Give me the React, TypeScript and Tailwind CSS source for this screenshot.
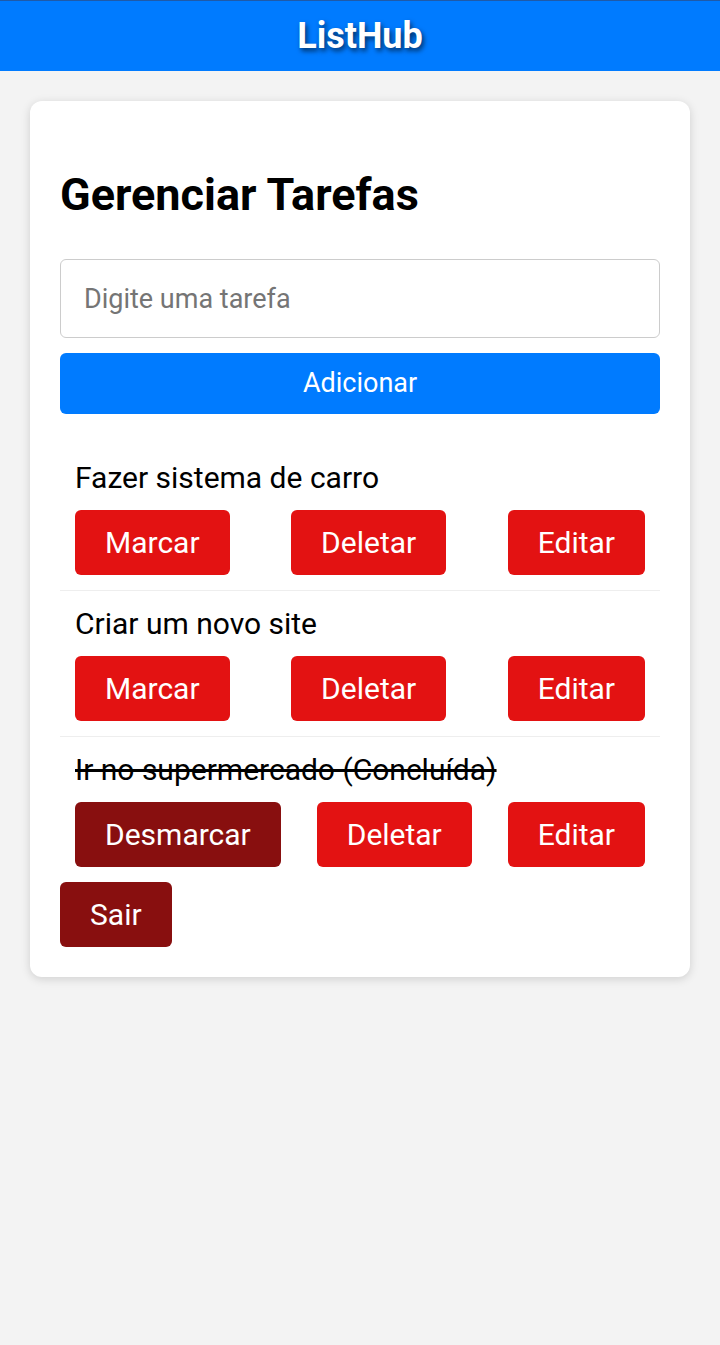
import React from "react";

const font = { fontFamily: "Roboto, 'Noto Sans', sans-serif" };

const tasks = [
  { text: "Fazer sistema de carro", done: false },
  { text: "Criar um novo site", done: false },
  { text: "Ir no supermercado", done: true },
];

export default function App() {
  return (
    <div className="min-h-[1345px] bg-[#f3f3f3]" style={font}>
      <header className="h-[71px] bg-[#007bff] border-t border-[#1f5aa8] flex items-center justify-center">
        <h1 className="text-[36px] font-bold text-white leading-none [text-shadow:2px_3px_5px_rgba(0,0,0,0.6)]">
          ListHub
        </h1>
      </header>

      <main className="px-[30px] pt-[30px]">
        <div className="bg-white rounded-[12px] p-[30px] shadow-[0_2px_10px_rgba(0,0,0,0.15)]">
          <h2 className="text-[45px] font-bold text-black leading-none mt-[41px] mb-[42px]">
            Gerenciar Tarefas
          </h2>

          <input
            type="text"
            placeholder="Digite uma tarefa"
            className="w-full h-[79px] border border-[#cccccc] rounded-[6px] px-[23px] text-[27px] text-black placeholder:text-[#757575] outline-none"
          />
          <button className="mt-[15px] w-full h-[61px] bg-[#007bff] rounded-[6px] text-white text-[27px]">
            Adicionar
          </button>

          <ul className="mt-[31px]">
            {tasks.map((t, i) => (
              <TaskItem key={i} {...t} last={i === tasks.length - 1} />
            ))}
          </ul>

          <button className="h-[65px] px-[30px] bg-[#880f0f] rounded-[6px] text-white text-[30px]">
            Sair
          </button>
        </div>
      </main>
    </div>
  );
}

function TaskItem({
  text,
  done,
  last,
}: {
  text: string;
  done: boolean;
  last: boolean;
}) {
  return (
    <li
      className={
        "px-[15px] pb-[15px] " + (last ? "" : "border-b border-[#eeeeee]")
      }
    >
      <div
        className={
          "text-[30px] text-black leading-[36px] pt-[15px] " +
          (done ? "line-through" : "")
        }
      >
        {done ? text + " (Concluída)" : text}
      </div>
      <div className="mt-[14px] flex justify-between">
        <ActionButton dark={done}>{done ? "Desmarcar" : "Marcar"}</ActionButton>
        <ActionButton>Deletar</ActionButton>
        <ActionButton>Editar</ActionButton>
      </div>
    </li>
  );
}

function ActionButton({
  children,
  dark,
}: {
  children: React.ReactNode;
  dark?: boolean;
}) {
  return (
    <button
      className={
        "h-[65px] px-[30px] rounded-[6px] text-white text-[30px] " +
        (dark ? "bg-[#880f0f]" : "bg-[#e31212]")
      }
    >
      {children}
    </button>
  );
}
